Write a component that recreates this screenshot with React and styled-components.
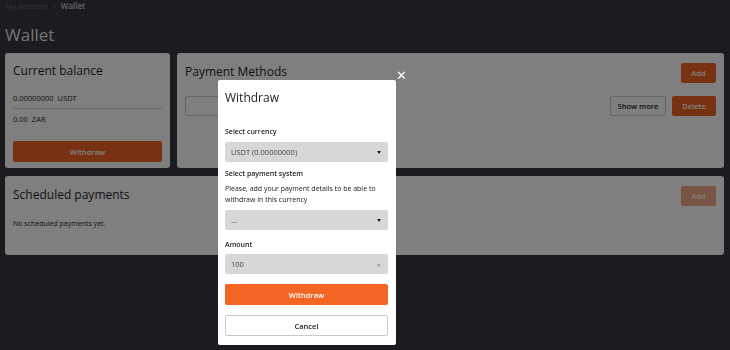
import React from 'react'
import styled, { createGlobalStyle } from 'styled-components'

const GlobalStyle = createGlobalStyle`
  html, body {
    margin: 0;
    padding: 0;
    background: #38363f;
    font-family: "Open Sans", "Noto Sans", sans-serif;
    overflow: hidden;
  }
`

const Page = styled.div`
  width: 730px;
  height: 350px;
  padding: 0 6px 0 5px;
  box-sizing: border-box;
  color: #1f1f1f;
`

const Breadcrumbs = styled.div`
  height: 12px;
  font-size: 8px;
  line-height: 11px;
  color: #6d6d74;
  span { margin: 0 5px; }
  b { color: #c8c8cc; font-weight: 600; }
`

const Title = styled.h1`
  margin: 12px 0 0;
  font-size: 17px;
  font-weight: 400;
  line-height: 22px;
  color: #e6e6e6;
`

const Grid = styled.div`
  display: grid;
  grid-template-columns: 165px 1fr;
  gap: 8px 7px;
  margin-top: 7px;
`

const Card = styled.div`
  background: #ffffff;
  border-radius: 3px;
  padding: 10px 8px 7px;
  box-sizing: border-box;
  height: ${p => p.$h}px;
  grid-column: ${p => (p.$wide ? '1 / -1' : 'auto')};
`

const CardHead = styled.div`
  display: flex;
  justify-content: space-between;
  align-items: flex-start;
`

const CardTitle = styled.h2`
  margin: 0;
  font-size: 12px;
  font-weight: 400;
  line-height: 16px;
  padding-top: ${p => p.$pt || 0}px;
`

const Balances = styled.div`
  margin-top: 9px;
`

const BalanceRow = styled.div`
  font-size: 7.5px;
  line-height: 10px;
  padding: 5px 0;
  border-bottom: ${p => (p.$line ? '1px solid #d4d4d4' : 'none')};
  span { margin-left: 4px; }
`

const Button = styled.button`
  font-family: inherit;
  height: 20px;
  border-radius: 2px;
  font-size: 7.5px;
  font-weight: 600;
  padding: 0;
  cursor: pointer;
  width: ${p => (p.$w ? `${p.$w}px` : '100%')};
  background: ${p => (p.$ghost ? '#ffffff' : p.$faded ? '#f0a88a' : '#f26522')};
  color: ${p => (p.$ghost ? '#222' : '#ffffff')};
  border: ${p => (p.$ghost ? '1px solid #c9c9c9' : '1px solid transparent')};
`

const WideButton = styled(Button)`
  display: block;
  margin-top: 12px;
  height: 21px;
`

const MethodRow = styled.div`
  display: flex;
  justify-content: space-between;
  margin-top: 13px;
`

const Actions = styled.div`
  display: flex;
  gap: 6px;
`

const EmptyBox = styled.div`
  width: 60px;
  height: 20px;
  border: 1px solid #c9c9c9;
  border-radius: 2px;
  box-sizing: border-box;
`

const Empty = styled.p`
  margin: 13px 0 0;
  font-size: 7px;
`

const Overlay = styled.div`
  position: fixed;
  inset: 0;
  background: rgba(0, 0, 0, 0.5);
`

const Close = styled.div`
  position: absolute;
  left: 396px;
  top: 69px;
  color: #fff;
  font-size: 13px;
  line-height: 13px;
`

const Modal = styled.div`
  position: absolute;
  left: 218px;
  top: 80px;
  width: 178px;
  height: 265px;
  background: #fff;
  border-radius: 2px;
  padding: 10px 8px 0 7px;
  box-sizing: border-box;
  color: #222;
`

const ModalTitle = styled.h3`
  margin: 0;
  font-size: 12px;
  font-weight: 400;
  line-height: 16px;
`

const Label = styled.div`
  font-size: 7px;
  font-weight: 600;
  line-height: 10px;
  margin-top: ${p => p.$mt}px;
`

const Hint = styled.div`
  font-size: 7px;
  line-height: 11px;
  margin-top: 4px;
`

const Field = styled.div`
  display: flex;
  align-items: center;
  justify-content: space-between;
  height: 20px;
  margin-top: ${p => p.$mt}px;
  padding: 0 7px 0 6px;
  background: #d7d7d7;
  border-radius: 2px;
  font-size: 7.5px;
  color: #444;
`

const Caret = styled.span`
  width: 0;
  height: 0;
  border-left: 2.5px solid transparent;
  border-right: 2.5px solid transparent;
  border-top: 3px solid #222;
`

const Clear = styled.span`
  font-size: 8px;
  color: #888;
`

const ModalButton = styled(Button)`
  height: 21px;
  margin-top: ${p => p.$mt}px;
  display: block;
`

export default function App() {
  return (
    <>
      <GlobalStyle />
      <Page>
        <Breadcrumbs>My account<span>/</span><b>Wallet</b></Breadcrumbs>
        <Title>Wallet</Title>
        <Grid>
          <Card $h={115}>
            <CardTitle>Current balance</CardTitle>
            <Balances>
              <BalanceRow $line>0.00000000<span>USDT</span></BalanceRow>
              <BalanceRow>0.00<span>ZAR</span></BalanceRow>
            </Balances>
            <WideButton>Withdraw</WideButton>
          </Card>
          <Card $h={115}>
            <CardHead>
              <CardTitle $pt={1}>Payment Methods</CardTitle>
              <Button $w={35}>Add</Button>
            </CardHead>
            <MethodRow>
              <EmptyBox />
              <Actions>
                <Button $ghost $w={56}>Show more</Button>
                <Button $w={44}>Delete</Button>
              </Actions>
            </MethodRow>
          </Card>
          <Card $wide $h={79}>
            <CardHead>
              <CardTitle $pt={1}>Scheduled payments</CardTitle>
              <Button $faded $w={35}>Add</Button>
            </CardHead>
            <Empty>No scheduled payments yet.</Empty>
          </Card>
        </Grid>
      </Page>
      <Overlay>
        <Close>✕</Close>
        <Modal>
          <ModalTitle>Withdraw</ModalTitle>
          <Label $mt={21}>Select currency</Label>
          <Field $mt={5}>USDT (0.00000000)<Caret /></Field>
          <Label $mt={7}>Select payment system</Label>
          <Hint>Please, add your payment details to be able to<br />withdraw in this currency</Hint>
          <Field $mt={5}>...<Caret /></Field>
          <Label $mt={10}>Amount</Label>
          <Field $mt={4}>100<Clear>×</Clear></Field>
          <ModalButton $mt={10}>Withdraw</ModalButton>
          <ModalButton $ghost $mt={10}>Cancel</ModalButton>
        </Modal>
      </Overlay>
    </>
  )
}
